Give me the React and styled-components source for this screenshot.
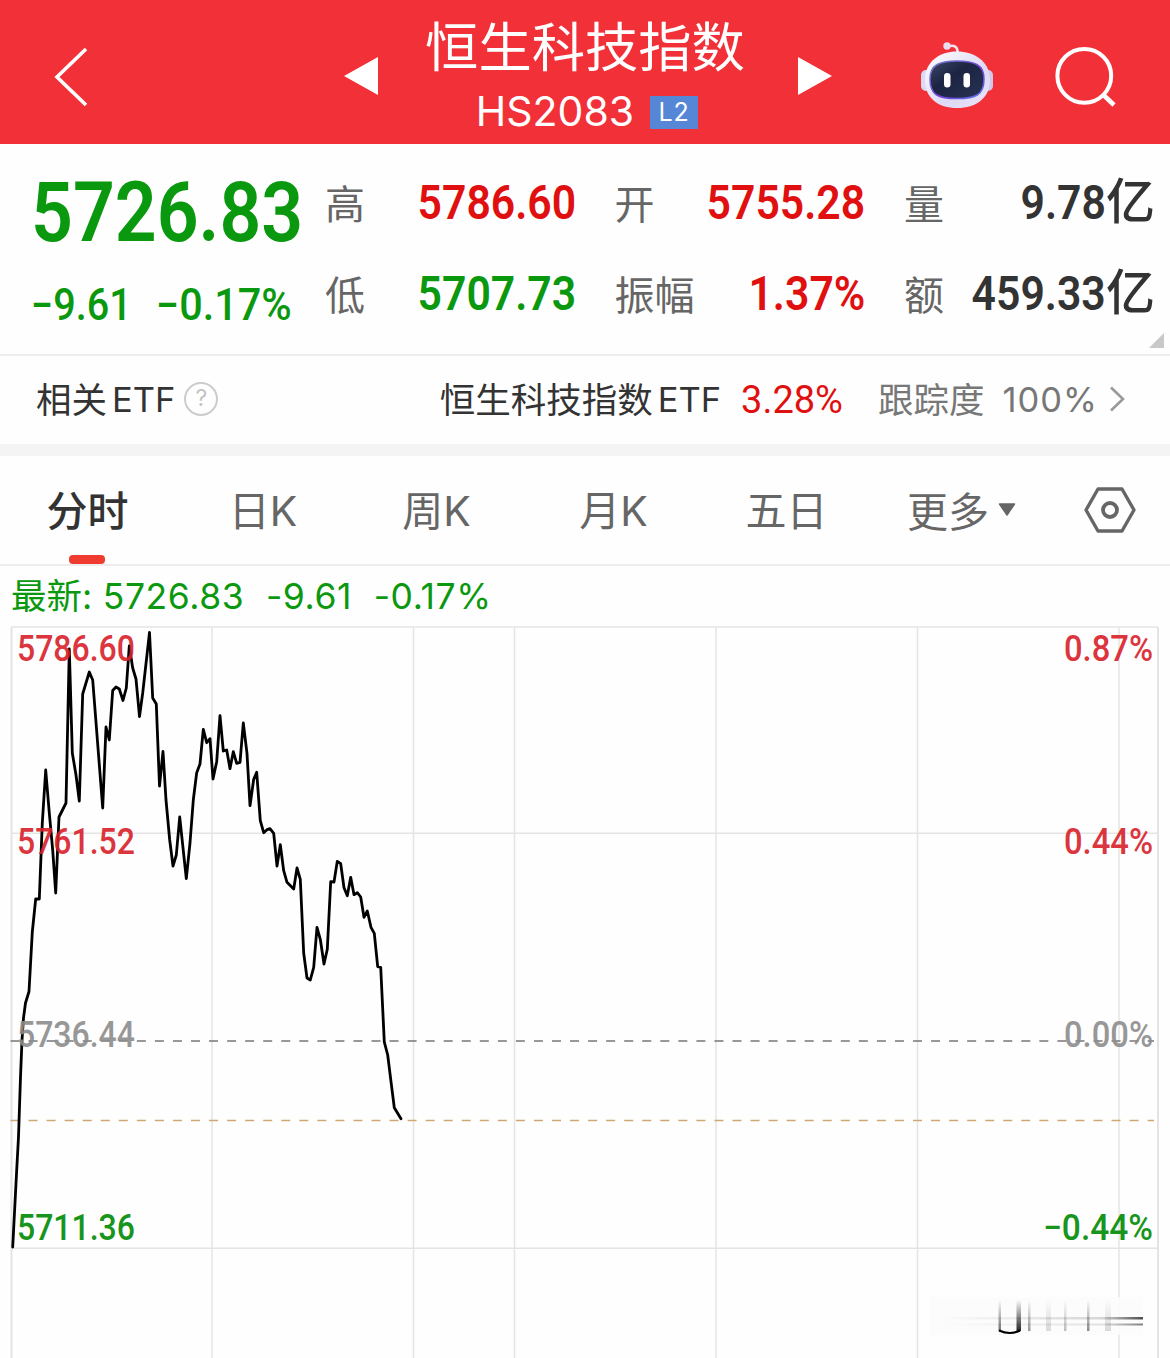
import React from 'react';
import styled, { createGlobalStyle } from 'styled-components';

const RED = '#e01010';
const GREEN = '#0a980f';

const stats = [
  { label: '高', value: '5786.60', color: RED },
  { label: '开', value: '5755.28', color: RED },
  { label: '量', value: '9.78', unit: '亿' },
  { label: '低', value: '5707.73', color: GREEN },
  { label: '振幅', value: '1.37%', color: RED },
  { label: '额', value: '459.33', unit: '亿' },
];

const tabs = [
  { name: '分时', width: 175, active: true },
  { name: '日K', width: 176 },
  { name: '周K', width: 171 },
  { name: '月K', width: 183 },
  { name: '五日', width: 163 },
];

const pricePoints = `12.7,1247 16.7,1170 18.5,1137 20.5,1077 22,1040 23.5,1018 25.5,1003 29,991.5
  32.3,932 35.7,899 39.3,899 42.3,823 45.7,770 49.3,813 52.7,850 55.7,893 59,817 66,803
  69.3,649 72.3,753 76,775 79.3,801 82.7,694 89.3,672 92.7,680 102.7,808 106,727 109.3,740
  112.7,690.5 116,687 119.3,689 123,700.5 126.3,688 129.3,646 132.7,668 136,679 139.5,716.5
  142.7,693 149.5,632.5 152.7,698 156.3,704 159.5,786 163,751.5 166,800 169.7,840 173,866
  176.3,855 179.7,817 186.3,878.7 190,843 193.3,800 196.7,772.7 200,764 203.3,729.3
  206.7,742.7 210,738.7 213,779 216.7,761.7 220,715.7 223.3,751 226.7,750 230,768.7
  233.3,751.7 236.7,763.3 240,762.3 243.3,723 247,753.3 250,805.7 253.7,779.3 256.7,772.3
  260.3,820.7 263.7,832.7 267,829.7 270,828.7 273.7,833.3 277,866 280.3,844.7 283.7,870.7
  287,882.3 293.7,889 297,868 300.3,879.3 303.7,953.3 307,978 310.3,980 313.7,967.3
  317,927.3 320.3,939.3 324,964 327.3,949.3 330.7,881.7 334,882 337.3,861.3 340.7,863.7
  344,887.7 347.3,895.7 350.7,877.3 354,894.7 357.3,892.7 360.7,897 364,917.3 367.3,911
  371,927.3 374.3,933.3 377.7,966.7 380.7,967.3 384.3,1042 387.7,1055 391,1081.7
  394.3,1107.7 401,1118.7`;

const axisLabels = [
  { y: 661, left: '5786.60', right: '0.87%', x: 1064, width: 89, color: '#d8202a' },
  { y: 854, left: '5761.52', right: '0.44%', x: 1064, width: 89, color: '#d8202a' },
  { y: 1047, left: '5736.44', right: '0.00%', x: 1064, width: 89, color: '#8c8c8c' },
  { y: 1240, left: '5711.36', right: '−0.44%', x: 1043, width: 110, color: '#008a04' },
];

function Robot() {
  return (
    <svg width='74' height='68' viewBox='920 41 74 68'>
      <defs>
        <linearGradient id='shell' x1='0' y1='0' x2='1' y2='1'>
          <stop offset='0' stopColor='#ffffff' />
          <stop offset='0.6' stopColor='#ded9f5' />
          <stop offset='1' stopColor='#e9e4f8' />
        </linearGradient>
        <linearGradient id='visor' x1='0' y1='0' x2='1' y2='1'>
          <stop offset='0' stopColor='#3d4766' />
          <stop offset='0.4' stopColor='#1c2442' />
          <stop offset='1' stopColor='#2a3254' />
        </linearGradient>
        <linearGradient id='rim' x1='0' y1='0' x2='1' y2='1'>
          <stop offset='0' stopColor='#7581c8' />
          <stop offset='0.6' stopColor='#7041d8' />
          <stop offset='1' stopColor='#5a7bea' />
        </linearGradient>
      </defs>
      <path d='M948 46.5C954 44.5 958 46.5 957.5 53' fill='none' stroke='#eee2f2' strokeWidth='2.6' />
      <circle cx='947' cy='46' r='3.7' fill='#eddcec' />
      <rect x='921' y='70' width='10' height='21' rx='5' fill='#dcd9f2' />
      <rect x='983' y='70' width='10' height='21' rx='5' fill='#d3c6ee' />
      <path
        d='M957 51.5C974 51.5 990 61 990 80C990 98 976 108 957 108C938 108 925 98 925 80C925 61 940 51.5 957 51.5Z'
        fill='url(#shell)'
      />
      <path
        d='M957 61C975 61 984 65 984 79C984 95 976 98.5 957 98.5C938 98.5 930 95 930 79C930 65 939 61 957 61Z'
        fill='url(#visor)'
        stroke='url(#rim)'
        strokeWidth='1.5'
      />
      <rect x='944' y='73' width='6.5' height='14.5' rx='3.25' fill='#fff' />
      <rect x='963.5' y='73' width='6.5' height='14.5' rx='3.25' fill='#fff' />
    </svg>
  );
}

function Header() {
  return (
    <HeaderBar>
      <BackIcon viewBox='0 0 36 62'>
        <path d='M33 4L4 32L33 60' fill='none' stroke='#fff' strokeWidth='3.6' />
      </BackIcon>
      <Arrow $left />
      <TitleBox>
        <Title>恒生科技指数</Title>
        <CodeRow>
          <Code>HS2083</Code>
          <Badge>L2</Badge>
        </CodeRow>
      </TitleBox>
      <Arrow />
      <RobotBox>
        <Robot />
      </RobotBox>
      <svg width='62' height='62' viewBox='0 0 62 62'>
        <ellipse cx='30.3' cy='30.8' rx='26.9' ry='26.9' fill='none' stroke='#fff' strokeWidth='4' />
        <path d='M49 49.5L60 60' stroke='#fff' strokeWidth='4.5' />
      </svg>
    </HeaderBar>
  );
}

function Quote() {
  return (
    <QuotePanel>
      <PriceBox>
        <Price>5726.83</Price>
        <ChangeRow>
          <Change $width={125}>−9.61</Change>
          <Change $scale={0.95}>−0.17%</Change>
        </ChangeRow>
      </PriceBox>
      <StatGrid>
        {stats.map((item) => (
          <Stat key={item.label}>
            <StatLabel>{item.label}</StatLabel>
            <StatValue $color={item.color}>
              <Digits>{item.value}</Digits>
              {item.unit && <Unit>{item.unit}</Unit>}
            </StatValue>
          </Stat>
        ))}
      </StatGrid>
      <Corner />
    </QuotePanel>
  );
}

function EtfRow() {
  return (
    <EtfBar>
      <EtfText>相关</EtfText>
      <EtfLatin>ETF</EtfLatin>
      <Help>?</Help>
      <EtfLink>
        <EtfText>恒生科技指数</EtfText>
        <EtfLatin>ETF</EtfLatin>
        <EtfChange>3.28%</EtfChange>
        <EtfText $muted>跟踪度</EtfText>
        <Tracking>100%</Tracking>
        <svg width='16' height='28' viewBox='0 0 16 28'>
          <path d='M2 1.5L14 13L2 24.5' fill='none' stroke='#999' strokeWidth='2.6' />
        </svg>
      </EtfLink>
    </EtfBar>
  );
}

function Tabs() {
  return (
    <TabBar>
      {tabs.map((tab) => (
        <Tab key={tab.name} $width={tab.width} $active={tab.active}>
          {tab.name}
        </Tab>
      ))}
      <More>
        更多
        <svg width='18' height='14' viewBox='0 0 18 14'>
          <path d='M1.5 2H16.5L9 13Z' fill='#666' stroke='#666' strokeWidth='1.5' strokeLinejoin='round' />
        </svg>
      </More>
      <svg width='52' height='46' viewBox='0 0 52 46'>
        <path d='M14 2H38L50 23L38 44H14L2 23Z' fill='none' stroke='#666' strokeWidth='3.4' strokeLinejoin='round' />
        <circle cx='26' cy='23' r='7' fill='none' stroke='#666' strokeWidth='3.8' />
      </svg>
    </TabBar>
  );
}

function Watermark() {
  return (
    <g>
      <defs>
        <linearGradient id='fadeDown' x1='0' y1='0' x2='0' y2='1'>
          <stop offset='0' stopColor='#000' stopOpacity='0' />
          <stop offset='1' stopColor='#000' />
        </linearGradient>
        <linearGradient id='fadeRight' x1='0' y1='0' x2='1' y2='0'>
          <stop offset='0' stopColor='#000' stopOpacity='0' />
          <stop offset='0.8' stopColor='#000' stopOpacity='0.15' />
          <stop offset='1' stopColor='#000' stopOpacity='0.7' />
        </linearGradient>
      </defs>
      <rect x='930' y='1297' width='213' height='38' fill='#fcfcfc' opacity='0.9' />
      <rect x='998.5' y='1300' width='2.5' height='31' fill='url(#fadeDown)' opacity='0.55' />
      <rect x='1016.5' y='1300' width='4.5' height='31' fill='url(#fadeDown)' opacity='0.85' />
      <path d='M999 1330.5Q1010 1335.5 1020 1330.5' fill='none' stroke='#000' strokeWidth='2' />
      <rect x='1028' y='1300' width='2.5' height='31' fill='url(#fadeDown)' opacity='0.4' />
      <rect x='1046' y='1300' width='5' height='31' fill='url(#fadeDown)' opacity='0.14' />
      <rect x='1064' y='1300' width='2.5' height='31' fill='url(#fadeDown)' opacity='0.25' />
      <rect x='1087' y='1300' width='2.5' height='31' fill='url(#fadeDown)' opacity='0.45' />
      <rect x='1105' y='1300' width='6' height='31' fill='url(#fadeDown)' opacity='0.14' />
      <rect x='940' y='1317' width='203' height='2.5' fill='url(#fadeRight)' />
      <rect x='940' y='1323.5' width='203' height='2' fill='url(#fadeRight)' opacity='0.7' />
    </g>
  );
}

function Chart() {
  return (
    <ChartSvg viewBox='0 626 1170 732'>
      <g stroke='#e4e4e4' strokeWidth='1.5'>
        {[212, 413.5, 514.5, 716, 917.5, 1119].map((x) => (
          <line key={x} x1={x} x2={x} y1='627' y2='1358' />
        ))}
        {[627, 833.3, 1248.3].map((y) => (
          <line key={y} x1='11' x2='1158' y1={y} y2={y} />
        ))}
        <line x1='11.5' x2='11.5' y1='627' y2='1358' strokeWidth='2' />
        <line x1='1158' x2='1158' y1='627' y2='1358' strokeWidth='2' />
      </g>
      <g strokeDasharray='9 9.05' strokeWidth='1.6'>
        <line x1='10.5' x2='1154' y1='1041' y2='1041' stroke='#777' />
        <line x1='10.5' x2='1154' y1='1120.5' y2='1120.5' stroke='#cda875' />
      </g>
      <polyline
        points={pricePoints}
        fill='none'
        stroke='#000'
        strokeWidth='2.8'
        strokeLinejoin='round'
        strokeLinecap='round'
      />
      {axisLabels.map((label) => (
        <AxisText key={label.y} fill={label.color}>
          <text x='17' y={label.y} textLength='118' lengthAdjust='spacingAndGlyphs'>
            {label.left}
          </text>
          <text x={label.x} y={label.y} textLength={label.width} lengthAdjust='spacingAndGlyphs'>
            {label.right}
          </text>
        </AxisText>
      ))}
      <Watermark />
    </ChartSvg>
  );
}

function App() {
  return (
    <Page>
      <GlobalStyle />
      <Header />
      <Quote />
      <EtfRow />
      <Tabs />
      <Latest>
        <LatestLabel>最新:</LatestLabel>
        <span>5726.83</span>
        <span>-9.61</span>
        <span>-0.17%</span>
      </Latest>
      <Chart />
    </Page>
  );
}
export default App;

const GlobalStyle = createGlobalStyle`
  * {
    box-sizing: border-box;
  }
  body {
    margin: 0;
    background: #fff;
  }
  svg {
    display: block;
    flex-shrink: 0;
  }
`;

const Page = styled.div`
  width: 1170px;
  height: 1358px;
  overflow: hidden;
  background: #fefefe;
  color: #333;
  font-family: 'Inter', 'Noto Sans CJK SC', sans-serif;
  white-space: nowrap;
`;

const HeaderBar = styled.header`
  height: 144px;
  display: flex;
  align-items: center;
  padding: 8px 0 0 53px;
  background: #f23038;
  color: #fff;
`;

const BackIcon = styled.svg`
  width: 36px;
  height: 62px;
  margin-right: 255px;
`;

const Arrow = styled.div`
  width: 34px;
  height: 38px;
  background: #fff;
  clip-path: ${({ $left }) =>
    $left ? 'polygon(100% 0, 100% 100%, 0 50%)' : 'polygon(0 0, 100% 50%, 0 100%)'};
`;

const TitleBox = styled.div`
  width: 420px;
  height: 136px;
  display: flex;
  flex-direction: column;
  align-items: center;
`;

const Title = styled.div`
  height: 78px;
  line-height: 79px;
  font-size: 53.3px;
  margin-right: 6px;
`;

const CodeRow = styled.div`
  display: flex;
  align-items: center;
  margin-right: 2px;
  gap: 16px;
`;

const Code = styled.span`
  font-size: 41px;
  line-height: 50px;
`;

const Badge = styled.span`
  width: 48px;
  height: 33px;
  margin-top: 2px;
  background: #5587d6;
  font-size: 25px;
  line-height: 32px;
  letter-spacing: 1px;
  text-align: center;
`;

const RobotBox = styled.div`
  margin: -2px 60px 0 88px;
`;

const QuotePanel = styled.section`
  height: 212px;
  display: flex;
  padding: 13px 15px 0 31px;
  border-bottom: 2px solid #ededed;
  position: relative;
`;

const PriceBox = styled.div`
  width: 294px;
  color: ${GREEN};
  font-family: 'Roboto', sans-serif;
`;

const Price = styled.div`
  height: 100px;
  font-size: 84px;
  line-height: 112px;
  font-weight: 600;
  transform: scaleX(0.873);
  transform-origin: left;
`;

const ChangeRow = styled.div`
  display: flex;
  line-height: 98px;
`;

const Change = styled.span`
  width: ${({ $width }) => ($width ? `${$width}px` : 'auto')};
  font-size: 43.5px;
  font-weight: 500;
  transform: scaleX(${({ $scale }) => $scale || 0.91});
  transform-origin: left;
`;

const StatGrid = styled.div`
  flex: 1;
  display: grid;
  grid-template-columns: repeat(3, 251px);
  grid-auto-rows: 91px;
  column-gap: 38.5px;
`;

const Stat = styled.div`
  display: flex;
  justify-content: space-between;
  line-height: 91px;
`;

const StatLabel = styled.span`
  color: #666;
  font-size: 40px;
  line-height: 95px;
`;

const StatValue = styled.span`
  display: flex;
  color: ${({ $color }) => $color || '#333'};
`;

const Digits = styled.span`
  font-family: 'Roboto', sans-serif;
  font-size: 48px;
  font-weight: 600;
  transform: scaleX(0.89);
  transform-origin: right;
`;

const Unit = styled.span`
  font-size: 49px;
  font-weight: 500;
  line-height: 90px;
`;

const Corner = styled.i`
  position: absolute;
  right: 6px;
  bottom: 6px;
  width: 15px;
  height: 15px;
  background: #c8c8c8;
  clip-path: polygon(100% 0, 100% 100%, 0 100%);
`;

const EtfBar = styled.section`
  height: 100px;
  display: flex;
  align-items: center;
  padding: 0 45px 0 36px;
  border-bottom: 12px solid #f4f4f4;
`;

const EtfText = styled.span`
  margin-top: -6px;
  font-size: 35.5px;
  color: ${({ $muted }) => ($muted ? '#777' : '#333')};
`;

const EtfLatin = styled.span`
  margin: -1px 0 0 5px;
  font-size: 34.5px;
`;

const Help = styled.span`
  width: 34px;
  height: 34px;
  margin: -2px 0 0 9px;
  border: 2.5px solid #ccc;
  border-radius: 50%;
  color: #c4c4c4;
  font-size: 23px;
  line-height: 29px;
  text-align: center;
`;

const EtfLink = styled.div`
  margin-left: auto;
  display: flex;
  align-items: center;
`;

const EtfChange = styled.span`
  width: 137px;
  margin: -1px 0 0 20px;
  color: ${RED};
  font-family: 'Roboto', sans-serif;
  font-size: 38px;
`;

const Tracking = styled.span`
  margin: -1px 11px 0 18px;
  color: #777;
  font-size: 34.5px;
  letter-spacing: 1px;
`;

const TabBar = styled.nav`
  height: 110px;
  display: flex;
  align-items: center;
  border-bottom: 2px solid #ededed;
`;

const Tab = styled.div`
  width: ${({ $width }) => $width}px;
  height: 108px;
  position: relative;
  color: ${({ $active }) => ($active ? '#333' : '#666')};
  font-size: 41px;
  font-weight: ${({ $active }) => ($active ? 500 : 400)};
  line-height: 111px;
  text-align: center;

  &::after {
    content: '';
    display: ${({ $active }) => ($active ? 'block' : 'none')};
    position: absolute;
    left: 69px;
    bottom: 0;
    width: 36px;
    height: 9px;
    border-radius: 4px;
    background: #f03b30;
  }
`;

const More = styled.div`
  width: 177px;
  margin: -2px 0 0 39px;
  display: flex;
  align-items: center;
  gap: 9px;
  color: #666;
  font-size: 41px;
`;

const Latest = styled.div`
  height: 60px;
  display: flex;
  gap: 21.5px;
  padding-left: 11px;
  color: ${GREEN};
  font-size: 35.5px;
  letter-spacing: 0.6px;
  line-height: 62px;
`;

const LatestLabel = styled.span`
  margin-right: -11px;
  letter-spacing: 0;
`;

const ChartSvg = styled.svg`
  width: 1170px;
  height: 732px;
`;

const AxisText = styled.g`
  font-family: 'Roboto', sans-serif;
  font-size: 36px;
  font-weight: 500;
  opacity: 0.9;
`;
